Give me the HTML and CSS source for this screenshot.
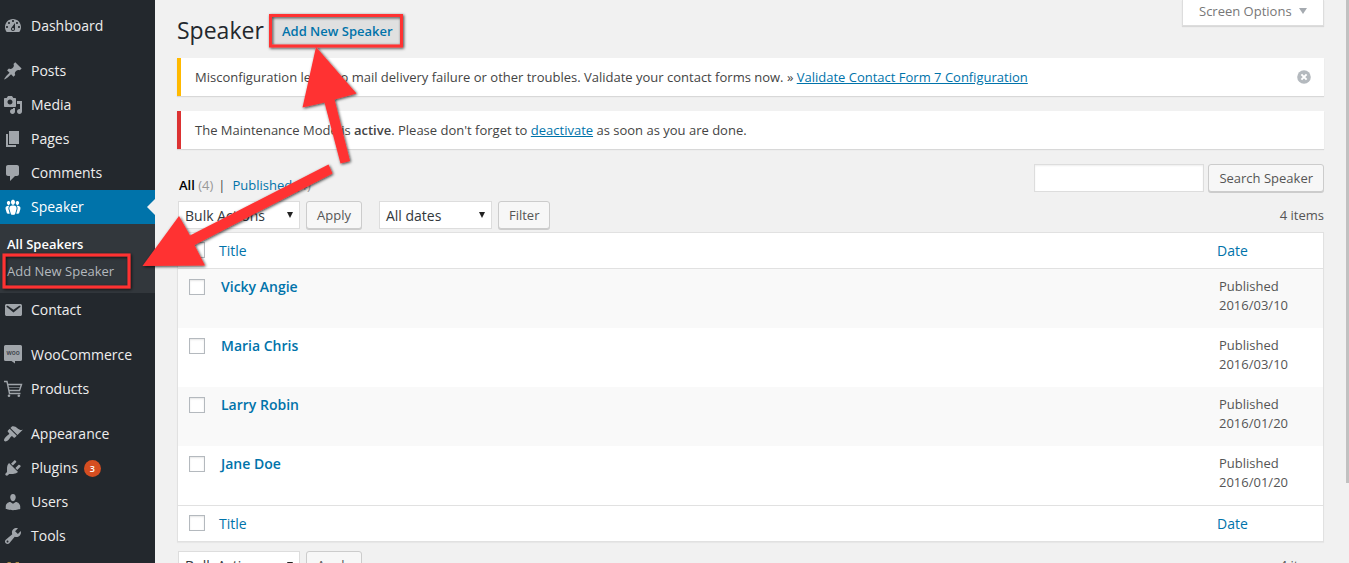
FILE: index.html
```html
<!DOCTYPE html>
<html lang="en">
<head>
<meta charset="utf-8">
<title>Speaker</title>
<link rel="stylesheet" href="styles.css">
</head>
<body>
<div class="admin">
  <nav class="menu">
    <a class="item"><svg class="icon" viewBox="0 0 20 20"><path fill-rule="evenodd" d="M3.76 16h12.48c1.1-1.37 1.76-3.11 1.76-5 0-4.42-3.58-8-8-8s-8 3.58-8 8c0 1.89.66 3.63 1.76 5zM10 4c.55 0 1 .45 1 1s-.45 1-1 1-1-.45-1-1 .45-1 1-1zM6 6c.55 0 1 .45 1 1s-.45 1-1 1-1-.45-1-1 .45-1 1-1zm8 0c.55 0 1 .45 1 1s-.45 1-1 1-1-.45-1-1 .45-1 1-1zm-5.37 5.55L12 7v6c0 1.1-.9 2-2 2s-2-.9-2-2c0-.57.24-1.08.63-1.45zM4 10c.55 0 1 .45 1 1s-.45 1-1 1-1-.45-1-1 .45-1 1-1zm12 0c.55 0 1 .45 1 1s-.45 1-1 1-1-.45-1-1 .45-1 1-1zm-5 3c0-.55-.45-1-1-1s-1 .45-1 1 .45 1 1 1 1-.45 1-1z"/></svg>Dashboard</a>
    <a class="item gap"><svg class="icon" viewBox="0 0 20 20"><path d="M10.44 3.02l1.82-1.82 6.36 6.35-1.83 1.82c-1.05-.68-2.48-.57-3.41.36l-.75.75c-.92.93-1.04 2.35-.35 3.41l-1.83 1.82-2.41-2.41-2.8 2.79c-.42.42-3.38 2.71-3.8 2.29s1.86-3.39 2.28-3.81l2.79-2.79L4.1 9.36l1.83-1.82c1.05.69 2.48.57 3.4-.36l.75-.75c.93-.92 1.05-2.35.36-3.41z"/></svg>Posts</a>
    <a class="item"><svg class="icon" viewBox="0 0 20 20"><path fill-rule="evenodd" d="M13 11V4c0-.55-.45-1-1-1h-1.67L9 1H5L3.67 3H2c-.55 0-1 .45-1 1v7c0 .55.45 1 1 1h10c.55 0 1-.45 1-1zM7 4.5c1.38 0 2.5 1.12 2.5 2.5S8.38 9.5 7 9.5 4.5 8.38 4.5 7 5.62 4.5 7 4.5zM14 6h5v10.5c0 1.38-1.12 2.5-2.5 2.5S14 17.88 14 16.5s1.12-2.5 2.5-2.5c.17 0 .34.02.5.05V9h-3V6zm-4 8.05V13h2v3.5c0 1.38-1.12 2.5-2.5 2.5S7 17.88 7 16.5 8.12 14 9.5 14c.17 0 .34.02.5.05z"/></svg>Media</a>
    <a class="item"><svg class="icon" viewBox="0 0 20 20"><path d="M6 15V2h10v13H6zm-1 1h8v2H3V5h2v11z"/></svg>Pages</a>
    <a class="item"><svg class="icon" viewBox="0 0 20 20"><path d="M5 2h9c1.1 0 2 .9 2 2v7c0 1.1-.9 2-2 2h-2l-5 5v-5H5c-1.1 0-2-.9-2-2V4c0-1.1.9-2 2-2z"/></svg>Comments</a>
    <a class="item current"><svg class="icon" viewBox="0 0 20 20"><path d="M8.03 4.46c-.29 1.28.55 3.46 1.97 3.46 1.41 0 2.25-2.18 1.96-3.46-.22-.98-1.08-1.63-1.96-1.63-.89 0-1.74.65-1.97 1.63zm-4.13.9c-.25 1.08.47 2.93 1.67 2.93s1.92-1.85 1.67-2.93c-.19-.83-.92-1.39-1.67-1.39s-1.48.56-1.67 1.39zm8.86 0c-.25 1.08.47 2.93 1.66 2.93 1.2 0 1.92-1.85 1.67-2.93-.19-.83-.92-1.39-1.67-1.39-.74 0-1.47.56-1.66 1.39zm-.59 11.43l1.25-4.3C14.2 10 12.71 8.47 10 8.47c-2.72 0-4.21 1.53-3.44 4.02l1.26 4.3C8.05 17.51 9 18 10 18c.98 0 1.94-.49 2.17-1.21zm-6.1-7.63c-.49.67-.96 1.83-.42 3.59l1.12 3.79c-.34.2-.77.31-1.2.31-.85 0-1.65-.41-1.85-1.03l-1.07-3.65c-.65-2.11.61-3.4 2.92-3.4.27 0 .54.02.79.06-.1.1-.2.22-.29.33zm8.35-.39c2.31 0 3.58 1.29 2.92 3.4l-1.07 3.65c-.2.62-1 1.03-1.85 1.03-.43 0-.86-.11-1.2-.31l1.11-3.77c.55-1.78.08-2.94-.42-3.61-.08-.11-.18-.23-.28-.33.25-.04.51-.06.79-.06z"/></svg>Speaker</a>
    <div class="submenu"><a class="sub active">All Speakers</a><a class="sub">Add New Speaker</a></div>
    <a class="item"><svg class="icon" viewBox="0 0 20 20"><path fill-rule="evenodd" d="M3.87 4h13.25C18.37 4 19 4.59 19 5.79v8.42c0 1.19-.63 1.79-1.88 1.79H3.87c-1.25 0-1.88-.6-1.88-1.79V5.79c0-1.2.63-1.79 1.88-1.79zm6.62 8.6l6.74-5.53c.24-.2.43-.66.13-1.07-.29-.41-.82-.42-1.17-.17l-5.7 3.86L4.8 5.83c-.35-.25-.88-.24-1.17.17-.3.41-.11.87.13 1.07z"/></svg>Contact</a>
    <a class="item gap"><svg class="icon" viewBox="0 0 20 20"><path d="M2.500 0h15q1.500 0 1.500 1.500v13q0 1.500-1.500 1.500h-5.500v2.500L8.500 16h-6Q1 16 1 14.500v-13Q1 0 2.500 0z"/><text class="woo" x="10" y="10" text-anchor="middle">woo</text></svg>WooCommerce</a>
    <a class="item"><svg class="icon" viewBox="0 0 20 20"><path class="line" d="M1 2.500h3L6.500 14.500h11M4.700 5.500h13.800L16.500 11.500H6"/><path class="faint" d="M6 8.500h11"/><circle cx="6" cy="16.800" r="1.300"/><circle cx="15.800" cy="16.800" r="1.300"/></svg>Products</a>
    <a class="item gap"><svg class="icon" viewBox="0 0 20 20"><path d="M14.480 11.060L7.410 3.990l1.500-1.500c.5-.56 2.300-.47 3.510.32 1.210.8 1.430 1.280 2.910 2.100 1.180.64 2.450 1.260 4.450.85zm-.71.71L6.700 4.700 4.930 6.470c-.39.39-.39 1.020 0 1.410l1.060 1.060c.39.39.39 1.030 0 1.420-.6.6-1.430 1.110-2.210 1.690-.35.26-.7.53-1.010.84C1.430 14.230.4 16.080 1.400 17.070c.99 1 2.840-.03 4.180-1.360.31-.31.58-.66.85-1.020.57-.78 1.080-1.610 1.690-2.210.39-.39 1.020-.39 1.410 0l1.060 1.060c.39.39 1.020.39 1.410 0z"/></svg>Appearance</a>
    <a class="item"><svg class="icon" viewBox="0 0 20 20"><path d="M13.110 4.360L9.870 7.600 8 5.730l3.240-3.240c.35-.34 1.050-.2 1.560.32.52.51.66 1.210.31 1.550zm-8 1.770l.91-1.120 9.010 9.010-1.190.84c-.71.71-2.630 1.160-3.820 1.160H6.140L4.900 17.260c-.59.59-1.540.59-2.120 0-.59-.58-.59-1.530 0-2.120l1.240-1.240v-3.880c0-1.130.4-3.190 1.090-3.890zm7.260 3.970l3.240-3.240c.34-.35 1.040-.21 1.550.31.52.51.66 1.210.31 1.550l-3.240 3.250z"/></svg>Plugins<span class="count">3</span></a>
    <a class="item"><svg class="icon" viewBox="0 0 20 20"><path d="M10 9.250c-2.270 0-2.730-3.440-2.730-3.440C7 4.020 7.820 2 9.970 2c2.160 0 2.980 2.020 2.710 3.810 0 0-.41 3.440-2.680 3.440zm0 2.570L12.720 10c2.390 0 4.520 2.330 4.520 4.530v2.490s-3.650 1.130-7.240 1.130c-3.650 0-7.240-1.130-7.240-1.130v-2.490c0-2.250 1.940-4.480 4.470-4.480z"/></svg>Users</a>
    <a class="item"><svg class="icon" viewBox="0 0 20 20"><path fill-rule="evenodd" d="M16.680 9.770c-1.340 1.340-3.300 1.670-4.950.99l-5.410 6.520c-.99.99-2.590.99-3.580 0s-.99-2.590 0-3.570l6.520-5.420c-.68-1.650-.35-3.610.99-4.950 1.280-1.280 3.120-1.620 4.720-1.060l-2.890 2.890 2.820 2.820 2.860-2.870c.53 1.580.18 3.390-1.080 4.650zM3.810 16.210c.4.39 1.040.39 1.430 0 .4-.4.4-1.040 0-1.430-.39-.4-1.030-.4-1.430 0-.39.39-.39 1.030 0 1.430z"/></svg>Tools</a>
    <a class="item"><svg class="icon gold" viewBox="0 0 20 20"><path d="M4.500 2h3l2.500 4 3-4h3v16H4.500z"/></svg></a>
  </nav>

  <main class="content">
    <header class="heading">
      <h1>Speaker</h1><a class="add">Add New Speaker</a>
      <div class="options">Screen Options<span class="caret"></span></div>
    </header>
    <div class="notice warning"><p>Misconfiguration leads to mail delivery failure or other troubles. Validate your contact forms now. » <a>Validate Contact Form 7 Configuration</a></p>
      <svg class="dismiss" viewBox="0 0 14 14"><circle cx="7" cy="7" r="6.800"/><path d="M4.400 4.400l5.200 5.200M9.600 4.400L4.400 9.600"/></svg></div>
    <div class="notice error"><p>The Maintenance Mode is <b>active</b>. Please don't forget to <a>deactivate</a> as soon as you are done.</p></div>

    <div class="views">
      <p class="filters"><b>All</b> <i>(4)</i><span class="bar">|</span><a>Published <i>(4)</i></a></p>
      <div class="search"><input class="field" type="text"><span class="button">Search Speaker</span></div>
    </div>
    <div class="tools">
      <div class="select bulk">Bulk Actions<span class="drop"></span></div><span class="button">Apply</span>
      <div class="select dates">All dates<span class="drop"></span></div><span class="button filter">Filter</span>
      <span class="total">4 items</span>
    </div>

    <section class="table">
      <div class="row head"><span class="box"></span><span class="title">Title</span><span class="date">Date</span></div>
      <div class="row alt"><span class="box"></span><b class="title">Vicky Angie</b><span class="date">Published<br>2016/03/10</span></div>
      <div class="row"><span class="box"></span><b class="title">Maria Chris</b><span class="date">Published<br>2016/03/10</span></div>
      <div class="row alt"><span class="box"></span><b class="title">Larry Robin</b><span class="date">Published<br>2016/01/20</span></div>
      <div class="row"><span class="box"></span><b class="title">Jane Doe</b><span class="date">Published<br>2016/01/20</span></div>
      <div class="row head foot"><span class="box"></span><span class="title">Title</span><span class="date">Date</span></div>
    </section>
    <div class="tools bottom">
      <div class="select bulk">Bulk Actions<span class="drop"></span></div><span class="button">Apply</span>
      <span class="total">4 items</span>
    </div>
  </main>
  <div class="scroll"><div class="thumb"></div></div>

  <svg class="callouts" viewBox="0 0 1349 563">
    <defs><filter id="shade" x="-10%" y="-10%" width="120%" height="120%"><feDropShadow dx="1" dy="1" stdDeviation="1.500" flood-color="#000" flood-opacity=".75"/></filter></defs>
    <g filter="url(#shade)">
      <rect class="frame" x="270.500" y="15.500" width="131" height="30.500"/>
      <rect class="frame" x="4" y="255" width="125" height="32"/>
      <path class="arrow" d="M316 47L356.500 93.500L334.500 99.500L350 161L340.500 163.500L324.500 102.500L302.500 107.500Z"/>
      <path class="arrow" d="M142.500 266L179 216L190 235.500L328.500 164.500L332.500 173.500L194.500 245L205 265.500Z"/>
    </g>
  </svg>
</div>
</body>
</html>
```
FILE: styles.css
```css
* { box-sizing: border-box; }
body { margin: 0; width: 1349px; height: 563px; overflow: hidden; background: #f1f1f1; color: #444; font: 13px/19px "Open Sans", sans-serif; }
.admin { position: relative; display: flex; height: 563px; overflow: hidden; }
h1, p { margin: 0; font-weight: 400; }
b { font-weight: 600; }
i { font-style: normal; }
a { color: #0073aa; }

.menu { width: 155px; flex: none; padding-top: 9px; background: #23282d; }
.item { position: relative; display: flex; align-items: center; height: 34px; padding-left: 3px; color: #eee; font-size: 14px; line-height: 18px; }
.gap { margin-top: 11px; }
.icon { width: 20px; height: 20px; margin-right: 8px; flex: none; fill: #a0a5aa; }
.line { fill: none; stroke: #a0a5aa; stroke-width: 1.4; }
.faint { fill: none; stroke: #6d7378; stroke-width: 1; }
.woo { fill: #3a4046; font: 600 6.5px "Open Sans", sans-serif; }
.gold { fill: #a98a45; }
.current { background: #0073aa; color: #fff; }
.current .icon { fill: #fff; }
.current::after { content: ""; position: absolute; right: 0; top: 9px; border: 8px solid transparent; border-left: 0; border-right-color: #f1f1f1; }
.submenu { height: 69px; padding: 7px 0 0 7px; background: #32373c; }
.sub { display: block; height: 27px; line-height: 27px; color: #b4b9be; }
.active { color: #fff; font-weight: 600; }
.count { width: 17px; height: 17px; margin-left: 6px; border-radius: 9px; background: #d54e21; color: #fff; font-size: 9px; font-weight: 600; line-height: 17px; text-align: center; }

.content { width: 1147px; flex: none; margin-left: 22px; }
.heading { display: flex; align-items: flex-start; height: 58px; }
h1 { margin-top: 16px; color: #23282d; font-size: 23px; line-height: 29px; }
.add { margin: 18px 0 0 9px; width: 129px; height: 27px; background: #e0e0e0; font-weight: 600; line-height: 27px; text-align: center; }
.options { display: flex; align-items: center; width: 142px; height: 26px; margin-left: auto; padding: 0 0 3px 16px; border: 1px solid #ddd; border-top: 0; background: #fff; box-shadow: 0 1px 1px rgba(0,0,0,.1); color: #777; }
.caret { margin-left: 7px; border: 4px solid transparent; border-top: 6px solid #a5aab0; border-bottom: 0; }
.notice { display: flex; align-items: center; height: 38px; margin-bottom: 15px; padding: 0 13px 0 14px; border-left: 4px solid #ffb900; background: #fff; box-shadow: 0 1px 1px rgba(0,0,0,.1); }
.notice a { text-decoration: underline; }
.error { border-color: #dc3232; }
.dismiss { width: 14px; height: 14px; margin-left: auto; fill: #b4b9be; }
.dismiss path { stroke: #fff; stroke-width: 2; }

.views { display: flex; justify-content: space-between; height: 37px; }
.filters { padding: 12px 0 0 2px; }
.filters b { color: #000; }
.filters i { color: #999; }
.bar { margin: 0 7px 0 5px; }
.search { display: flex; gap: 4px; }
.field { width: 170px; height: 28px; border: 1px solid #ddd; background: #fff; box-shadow: inset 0 1px 2px rgba(0,0,0,.07); }
.button { height: 28px; padding: 0 10px; border: 1px solid #ccc; border-radius: 3px; background: #f7f7f7; box-shadow: 0 1px 0 #ccc; color: #555; line-height: 27px; }
.filter { width: 52px; }
.tools { display: flex; height: 31px; padding-left: 1px; }
.select { display: flex; align-items: center; justify-content: space-between; height: 28px; margin-right: 6px; padding: 0 6px; border: 1px solid #ddd; background: #fff; color: #32373c; font-size: 14px; }
.bulk { width: 122px; }
.dates { width: 113px; margin-left: 17px; }
.drop { border: 3.5px solid transparent; border-top: 6px solid #222; border-bottom: 0; }
.total { margin: 5px 0 0 auto; color: #555; }

.table { border: 1px solid #e1e1e1; background: #fff; box-shadow: 0 1px 1px rgba(0,0,0,.04); }
.row { display: grid; grid-template-columns: 43px 1fr 104px; height: 59px; padding: 8px 0 0 0; }
.alt { background: #f9f9f9; }
.box { width: 16px; height: 16px; margin: 2px 0 0 11px; border: 1px solid #b4b9be; background: #fff; box-shadow: inset 0 1px 2px rgba(0,0,0,.1); }
.title { color: #0073aa; font-size: 14px; }
.date { color: #555; }
.head { grid-template-columns: 41px 1fr 106px; height: 36px; border-bottom: 1px solid #e1e1e1; }
.head .date { color: #0073aa; font-size: 14px; }
.head .box { margin-top: 1px; }
.foot { height: 36px; border-top: 1px solid #e1e1e1; border-bottom: 0; }
.bottom { margin-top: 9px; }

.scroll { width: 3px; height: 563px; margin-left: auto; }
.thumb { height: 483px; background: #c1c1c1; }
.callouts { position: absolute; left: 0; top: 0; width: 1349px; height: 563px; }
.frame { fill: none; stroke: #f33; stroke-width: 3; }
.arrow { fill: #f33; }
```
